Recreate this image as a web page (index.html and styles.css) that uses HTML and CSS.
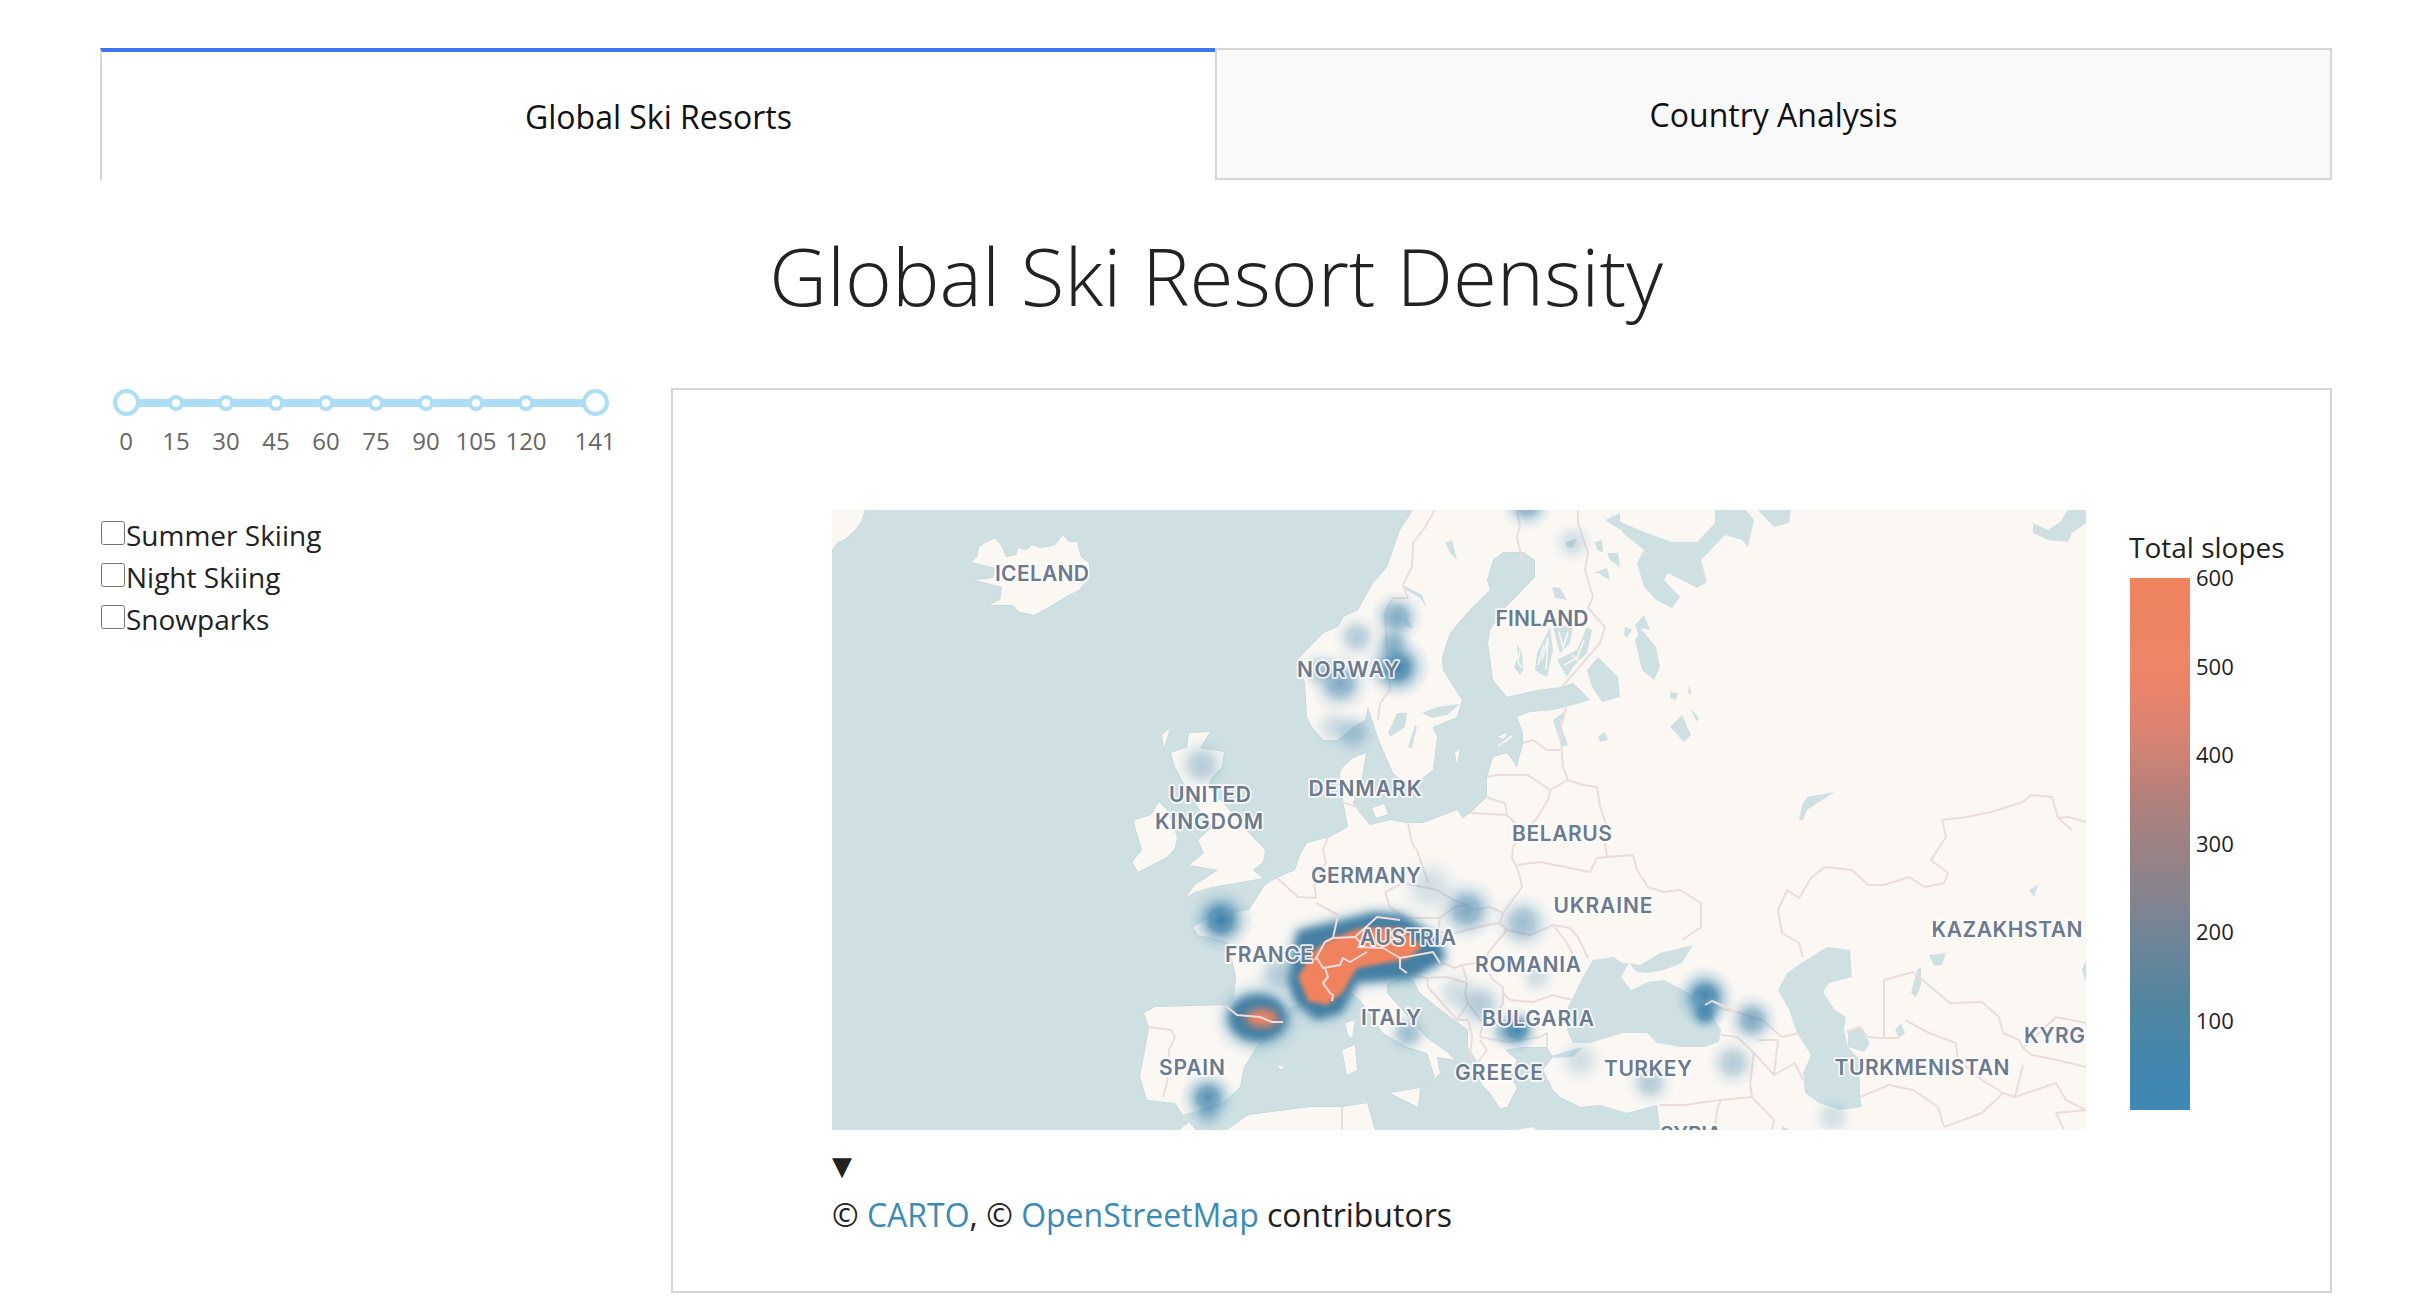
FILE: index.html
```html
<!DOCTYPE html>
<html lang="en">
<head>
<meta charset="utf-8">
<title>Global Ski Resort Density</title>
<link rel="stylesheet" href="styles.css">
</head>
<body>
<div class="page">
  <nav class="tabs">
    <div class="tab tab-active">Global Ski Resorts</div>
    <div class="tab tab-idle">Country Analysis</div>
  </nav>
  <h1 class="title">Global Ski Resort Density</h1>
  <main class="content">
    <aside class="sidebar">
      <div class="slider">
        <div class="slider-track"></div>
        <div class="marks">
          <div class="mark"><span class="dot dot-big"></span><span class="mark-text">0</span></div>
          <div class="mark"><span class="dot"></span><span class="mark-text">15</span></div>
          <div class="mark"><span class="dot"></span><span class="mark-text">30</span></div>
          <div class="mark"><span class="dot"></span><span class="mark-text">45</span></div>
          <div class="mark"><span class="dot"></span><span class="mark-text">60</span></div>
          <div class="mark"><span class="dot"></span><span class="mark-text">75</span></div>
          <div class="mark"><span class="dot"></span><span class="mark-text">90</span></div>
          <div class="mark"><span class="dot"></span><span class="mark-text">105</span></div>
          <div class="mark"><span class="dot"></span><span class="mark-text">120</span></div>
          <div class="mark mark-last"><span class="dot dot-big"></span><span class="mark-text">141</span></div>
        </div>
      </div>
      <div class="checks">
        <label class="check"><input type="checkbox">Summer Skiing</label>
        <label class="check"><input type="checkbox">Night Skiing</label>
        <label class="check"><input type="checkbox">Snowparks</label>
      </div>
    </aside>
    <section class="graph">
      <div class="graph-row">
        <svg class="map" viewBox="0 0 1254 620" width="1254" height="620" xmlns="http://www.w3.org/2000/svg">
          <defs>
            <radialGradient id="heat">
              <stop offset="0" stop-color="#3b7fa8" stop-opacity="1"/>
              <stop offset="0.35" stop-color="#4688ad" stop-opacity="0.8"/>
              <stop offset="0.7" stop-color="#7fb0c8" stop-opacity="0.3"/>
              <stop offset="1" stop-color="#a9cbd9" stop-opacity="0"/>
            </radialGradient>
            <filter id="blur-halo" x="-30%" y="-30%" width="160%" height="160%"><feGaussianBlur stdDeviation="8"/></filter>
            <filter id="blur-band" x="-30%" y="-30%" width="160%" height="160%"><feGaussianBlur stdDeviation="4"/></filter>
            <filter id="blur-core" x="-30%" y="-30%" width="160%" height="160%"><feGaussianBlur stdDeviation="2"/></filter>
          </defs>
          <rect class="sea" width="1254" height="620"/>
          <g class="land">
            <polygon points="0,0 33,0 29,12 23,20 12,30 6,32 0,40"/>
            <polygon points="139,52 145,47 147,37 155,32 163,28 170,37 174,47 184,45 186,38 194,40 200,35 208,38 215,37 223,35 231,25 237,32 245,32 249,47 257,53 257,67 247,80 233,87 217,97 202,105 188,102 180,95 157,95 168,90 170,77 143,70 161,68 163,58 139,52"/>
            <polygon points="357,223 378,222 368,238 392,242 390,257 380,267 376,277 395,297 405,310 417,323 433,340 431,352 421,360 431,368 404,373 380,377 363,382 353,388 363,375 386,360 357,355 372,343 366,330 380,317 368,300 358,285 350,270 343,257 339,243 355,237"/>
            <polygon points="327,292 335,300 345,327 343,338 335,347 306,362 300,352 310,340 304,320 302,310 319,305"/>
            <polygon points="581,0 568,20 555,57 541,73 526,100 511,107 506,117 491,123 475,140 465,150 473,173 475,207 480,217 491,230 506,230 521,217 533,210 536,197 541,213 548,233 561,263 571,272 588,270 601,260 605,227 601,217 625,207 630,190 611,160 610,147 618,123 635,103 658,80 655,70 661,50 671,42 691,42 703,50 703,67 688,83 671,100 658,120 656,133 661,170 675,187 705,180 730,177 741,173 758,190 733,197 721,200 698,202 685,207 691,223 691,233 685,257 675,243 661,247 655,267 655,287 638,303 631,308 625,300 591,313 575,313 558,310 538,315 528,303 521,293 530,267 534,243 521,248 511,257 508,263 511,290 516,317 498,327 475,333 468,345 463,360 445,368 433,375 417,400 400,403 396,397 361,417 366,425 396,432 404,467 402,487 396,495 323,497 312,503 317,518 308,567 315,590 343,593 351,605 392,592 408,577 412,557 427,533 453,513 457,497 475,492 500,497 519,483 528,490 551,523 575,537 595,543 603,567 596,577 608,563 605,547 623,550 615,542 595,528 555,483 555,475 570,467 580,468 588,483 605,497 636,520 636,537 645,552 643,560 650,575 658,583 668,598 675,597 685,578 678,565 685,550 673,540 690,537 715,537 721,547 711,560 721,580 728,587 748,597 768,595 795,603 825,595 828,620 1254,620 1254,0"/>
            <polygon points="347,620 357,612 364,620"/>
            <polygon points="395,620 416,605 478,597 510,597 535,593 543,620"/>
            <polygon points="513,513 523,510 520,528 516,525"/>
            <polygon points="510,540 523,535 525,560 515,565"/>
            <polygon points="558,583 588,578 586,597 576,592"/>
            <polygon points="445,555 453,557 449,560"/>
            <polygon points="665,227 676,222 672,229"/>
            <polygon points="623,243 628,238 625,255"/>
            <polygon points="540,298 552,294 556,304 544,308"/>
            <polygon points="683,620 700,617 706,620"/>
            <polygon points="330,225 338,218 332,238"/>
          </g>
          <g class="water">
            <polygon points="741,487 753,463 761,450 781,447 791,453 797,453 789,467 799,480 816,472 832,470 857,483 877,500 889,520 887,532 873,537 848,537 825,533 815,523 791,523 758,533 741,533 735,520 736,497"/>
            <polygon points="797,453 808,455 828,443 861,435 850,453 832,460 816,463 805,462"/>
            <polygon points="946,480 955,463 971,452 995,437 1018,440 1020,467 997,473 991,482 1003,500 1014,507 1012,520 1016,537 1028,550 1028,587 1030,597 1008,600 987,593 973,583 971,563 979,545 965,523 957,500"/>
            <polygon points="1016,520 1028,517 1038,533 1032,542 1016,537"/>
            <polygon points="715,547 751,537 741,547 721,548"/>
            <polygon points="1063,520 1069,513 1073,523 1067,528"/>
            <polygon points="1079,483 1085,460 1089,457 1089,475 1084,487"/>
            <polygon points="1097,445 1114,443 1110,455 1102,456"/>
            <polygon points="1197,380 1206,375 1202,387"/>
            <polygon points="1250,460 1254,450 1254,472"/>
            <polygon points="779,3 789,12 812,22 840,32 865,32 883,13 883,0 914,0 922,10 916,37 910,30 893,25 869,50 875,72 865,78 836,63 832,70 848,87 840,98 824,90 812,77 805,53 812,40 791,23 779,3"/>
            <polygon points="926,0 942,17 957,13 959,0"/>
            <polygon points="1236,0 1228,12 1216,20 1201,13 1201,23 1216,30 1236,32 1240,23 1254,13 1254,0"/>
            <polygon points="755,160 766,147 786,167 788,187 770,192 760,177"/>
            <polygon points="803,130 810,120 824,137 828,157 822,170 810,160"/>
            <polygon points="721,210 735,200 728,213 736,235 730,237"/>
            <polygon points="838,217 850,205 859,225 852,232"/>
            <polygon points="766,227 773,222 776,230 768,232"/>
            <polygon points="838,182 846,183 844,190 838,188"/>
            <polygon points="857,175 860,185 856,183"/>
            <polygon points="858,198 867,208 865,212"/>
            <polygon points="793,117 800,120 795,128 792,125"/>
            <polygon points="803,115 812,105 818,120 810,118 808,128"/>
            <polygon points="773,10 788,3 788,20"/>
            <polygon points="733,33 745,28 741,38 735,37"/>
            <polygon points="763,32 770,30 771,42 765,40"/>
            <polygon points="775,43 786,43 788,57 778,50"/>
            <polygon points="761,63 775,58 778,70 766,63"/>
            <polygon points="720,77 728,78 735,90 723,88"/>
            <polygon points="613,33 620,30 625,50 618,43"/>
            <polygon points="685,135 690,142 691,160 688,165 682,157 686,147"/>
            <polygon points="705,143 718,117 721,140 715,167 711,165 703,160"/>
            <polygon points="721,117 741,115 738,133 728,143 725,133"/>
            <polygon points="725,150 745,140 755,117 760,120 755,143 741,157 735,167"/>
            <polygon points="556,223 565,203 575,203 573,217 558,227"/>
            <polygon points="576,237 583,215 585,217 580,238"/>
            <polygon points="590,203 605,197 628,194 615,205 600,208"/>
            <polygon points="600,220 625,208 622,215 604,222"/>
            <polygon points="573,107 581,117 578,118 574,115"/>
            <polygon points="571,75 590,85 595,98 588,88 574,80"/>
            <polygon points="967,310 970,295 975,287 1003,282 985,293 975,300 971,310"/>
            <polygon points="950,616 957,620 950,620"/>
          </g>
          <g class="specks">
            <polyline points="688,140 686,152 690,158"/>
            <polyline points="710,150 716,128 714,160"/>
            <polyline points="727,122 731,138 736,122"/>
            <polyline points="732,155 745,148 752,130"/>
            <polyline points="740,145 748,152"/>
            <polyline points="706,155 712,135"/>
            <polyline points="673,232 680,226 666,236"/>
          </g>
          <g class="borders">
            <polyline points="603,0 591,20 581,33 580,57 571,75 576,88 561,88 553,103 555,140 558,180 548,193 546,210"/>
            <polyline points="685,0 688,17 685,27 690,50"/>
            <polyline points="746,0 746,13 756,43 753,60 761,87 756,98 773,117 768,133 730,177"/>
            <polyline points="734,198 728,220 731,257 736,270"/>
            <polyline points="691,233 701,230 715,240 728,240"/>
            <polyline points="655,267 665,265 696,265 718,280 736,270"/>
            <polyline points="736,270 751,275 765,277 768,297 775,317 779,323 773,333 775,347 801,345"/>
            <polyline points="718,280 716,290 705,308 685,330 681,337 680,348 686,360 690,377 671,403 668,413"/>
            <polyline points="638,303 675,305 673,293 653,287"/>
            <polyline points="675,305 683,313 685,330"/>
            <polyline points="685,355 708,352 758,362 765,348 775,347"/>
            <polyline points="801,345 805,360 816,377 831,382 848,380 869,393 869,417 850,430"/>
            <polyline points="576,313 580,333 585,340 596,373"/>
            <polyline points="510,292 525,297"/>
            <polyline points="496,327 491,340 494,353 482,370 484,388 466,387 445,368"/>
            <polyline points="553,382 571,373 605,380 621,390 635,395 641,400 658,397 671,403"/>
            <polyline points="553,382 558,397 573,408 608,408 623,397 635,395"/>
            <polyline points="608,408 606,422 623,423 655,415 668,413 675,420"/>
            <polyline points="606,422 603,443 608,452 623,458 630,455 635,470"/>
            <polyline points="675,420 658,440 651,453 661,470 671,477 671,483"/>
            <polyline points="630,455 645,453"/>
            <polyline points="671,483 678,490 701,492 721,485 740,490"/>
            <polyline points="675,420 698,425 721,415 738,418 746,427 756,448"/>
            <polyline points="721,415 735,433 741,445 750,463"/>
            <polyline points="671,483 671,493 665,503 651,513 648,527"/>
            <polyline points="648,527 675,532 708,527 715,523 715,537"/>
            <polyline points="648,530 655,540 646,552"/>
            <polyline points="636,510 640,527 638,547 643,552"/>
            <polyline points="595,468 615,467 635,473 633,483 636,493"/>
            <polyline points="595,468 596,477 625,510 636,510"/>
            <polyline points="636,493 625,510"/>
            <polyline points="636,493 651,513"/>
            <polyline points="568,463 595,468"/>
            <polyline points="484,393 506,405 500,427"/>
            <polyline points="1110,310 1114,327 1099,350 1116,363 1112,373 1093,377 1077,367 1052,375 1036,375 1020,360 993,357 979,368 967,388 955,380 946,400 950,423 967,433 971,447"/>
            <polyline points="1110,310 1134,307 1159,302 1191,292 1199,285 1220,287 1226,308 1236,307 1254,312"/>
            <polyline points="1226,308 1240,320"/>
            <polyline points="1052,470 1081,462 1118,493 1150,492 1167,507 1171,523 1187,530 1191,538 1224,507 1254,513"/>
            <polyline points="1052,470 1052,528 1036,527 1028,517 1014,522"/>
            <polyline points="1052,528 1067,528"/>
            <polyline points="1073,510 1097,523 1124,533 1126,550 1150,570 1171,583 1150,603"/>
            <polyline points="1028,587 1057,575 1081,580 1106,597 1112,617"/>
            <polyline points="1150,603 1112,617"/>
            <polyline points="1191,538 1200,545 1225,550 1254,557"/>
            <polyline points="1171,583 1183,587 1224,573 1234,590 1254,600 1224,603 1232,620"/>
            <polyline points="1191,555 1183,587"/>
            <polyline points="889,525 905,527 922,543 918,573 920,587 889,590 852,595 828,595"/>
            <polyline points="885,600 883,620"/>
            <polyline points="889,590 885,600"/>
            <polyline points="920,587 942,610 940,620"/>
            <polyline points="873,495 905,502 930,510 950,527 967,523"/>
            <polyline points="926,530 946,530 942,565 963,553 971,570"/>
            <polyline points="922,543 942,565"/>
            <polyline points="317,517 339,520 343,527 337,540 335,573 331,587"/>
            <polyline points="510,597 510,620"/>
          </g>
          <g class="heat">
            <circle class="h1" cx="565" cy="157" r="34"/>
            <circle class="h3" cx="565" cy="107" r="28"/>
            <circle class="h4" cx="561" cy="133" r="22"/>
            <circle class="h5" cx="525" cy="127" r="26"/>
            <circle class="h3" cx="508" cy="173" r="32"/>
            <circle class="h5" cx="488" cy="160" r="22"/>
            <circle class="h5" cx="521" cy="223" r="26"/>
            <circle class="h6" cx="501" cy="217" r="24"/>
            <circle class="h5" cx="370" cy="255" r="30"/>
            <circle class="h3" cx="695" cy="-6" r="28"/>
            <circle class="h6" cx="741" cy="33" r="24"/>
            <circle class="h1" cx="389" cy="410" r="34"/>
            <circle class="h5" cx="447" cy="465" r="28"/>
            <circle class="h4" cx="576" cy="523" r="24"/>
            <circle class="h6" cx="598" cy="377" r="36"/>
            <circle class="h6" cx="625" cy="483" r="28"/>
            <circle class="h3" cx="635" cy="400" r="34"/>
            <circle class="h4" cx="691" cy="413" r="32"/>
            <circle class="h5" cx="648" cy="495" r="30"/>
            <circle class="h1" cx="685" cy="520" r="24"/>
            <circle class="h5" cx="672" cy="522" r="20"/>
            <circle class="h6" cx="705" cy="467" r="22"/>
            <circle class="h1" cx="873" cy="487" r="32"/>
            <circle class="h2" cx="873" cy="503" r="20"/>
            <circle class="h3" cx="920" cy="510" r="28"/>
            <circle class="h5" cx="901" cy="553" r="28"/>
            <circle class="h5" cx="818" cy="573" r="26"/>
            <circle class="h6" cx="748" cy="550" r="28"/>
            <circle class="h6" cx="1001" cy="607" r="24"/>
            <circle class="h2" cx="376" cy="588" r="30"/>
            <circle class="h6" cx="376" cy="606" r="20"/>
            <ellipse class="band-halo" cx="426" cy="508" rx="34" ry="28"/>
            <ellipse class="band-blue" cx="426" cy="508" rx="29" ry="23"/>
            <ellipse class="band-core-soft" cx="430" cy="508" rx="16" ry="9"/>
            <polygon class="band-halo" points="456,470 466,421 501,413 541,403 570,405 605,428 613,447 608,452 578,469 525,472 510,502 485,510 463,492"/>
            <polygon class="band-blue" points="456,470 466,421 501,413 541,403 570,405 605,428 613,447 608,452 578,469 525,472 510,502 485,510 463,492"/>
            <polygon class="band-core" points="466,467 481,442 495,431 528,418 571,418 590,437 575,449 525,458 511,482 495,495 476,491"/>
          </g>
          <g class="borders-over">
            <polyline points="483,450 493,432 501,428 523,427 528,432 531,438"/>
            <polyline points="485,448 491,458 508,455 511,448 518,452 535,442"/>
            <polyline points="493,458 496,467 491,473 498,483 501,485 500,491"/>
            <polyline points="525,437 551,438 568,448 601,442 608,453"/>
            <polyline points="568,448 568,458 575,463"/>
            <polyline points="501,428 506,405"/>
            <polyline points="523,427 545,407 568,410"/>
            <polyline points="395,497 405,505 428,507 440,512 451,512"/>
            <polyline points="873,495 880,491 905,502"/>
          </g>
          <g class="labels">
            <text x="210" y="71" text-anchor="middle" textLength="94">ICELAND</text>
            <text x="516" y="167" text-anchor="middle" textLength="102">NORWAY</text>
            <text x="378" y="292" text-anchor="middle" textLength="82">UNITED</text>
            <text x="377" y="319" text-anchor="middle" textLength="108">KINGDOM</text>
            <text x="533" y="286" text-anchor="middle" textLength="113">DENMARK</text>
            <text x="710" y="116" text-anchor="middle" textLength="93">FINLAND</text>
            <text x="534" y="373" text-anchor="middle" textLength="110">GERMANY</text>
            <text x="437" y="452" text-anchor="middle" textLength="88">FRANCE</text>
            <text x="576" y="435" text-anchor="middle" textLength="96">AUSTRIA</text>
            <text x="559" y="515" text-anchor="middle" textLength="60">ITALY</text>
            <text x="360" y="565" text-anchor="middle" textLength="66">SPAIN</text>
            <text x="730" y="331" text-anchor="middle" textLength="100">BELARUS</text>
            <text x="771" y="403" text-anchor="middle" textLength="99">UKRAINE</text>
            <text x="696" y="462" text-anchor="middle" textLength="106">ROMANIA</text>
            <text x="706" y="516" text-anchor="middle" textLength="112">BULGARIA</text>
            <text x="667" y="570" text-anchor="middle" textLength="88">GREECE</text>
            <text x="816" y="566" text-anchor="middle" textLength="88">TURKEY</text>
            <text x="1175" y="427" text-anchor="middle" textLength="151">KAZAKHSTAN</text>
            <text x="1090" y="565" text-anchor="middle" textLength="175">TURKMENISTAN</text>
            <text x="1192" y="533" textLength="150">KYRGYZSTAN</text>
            <text x="859" y="632" text-anchor="middle" textLength="62">SYRIA</text>
          </g>
        </svg>
        <div class="legend">
          <div class="legend-title">Total slopes</div>
          <div class="legend-body">
            <div class="colorbar"></div>
            <div class="ticks">
              <span class="tick">600</span>
              <span class="tick">500</span>
              <span class="tick">400</span>
              <span class="tick">300</span>
              <span class="tick">200</span>
              <span class="tick">100</span>
            </div>
          </div>
        </div>
      </div>
      <div class="collapse">▼</div>
      <div class="attribution">© <a href="#">CARTO</a>, © <a href="#">OpenStreetMap</a> contributors</div>
    </section>
  </main>
</div>
</body>
</html>
```
FILE: styles.css
```css
* { box-sizing: border-box; }
html, body { margin: 0; padding: 0; background: #fff; }
body { font-family: "Open Sans", "Noto Sans", sans-serif; color: #212121; overflow: hidden; height: 1300px; }
.page { padding: 48px 98px 0 100px; }

.tabs { display: flex; height: 132px; }
.tab { flex: 1 1 0; display: flex; align-items: center; justify-content: center; font-size: 32px; color: #111; }
.tab-active { background: #fff; border-top: 4px solid #3b74ef; border-left: 2px solid #d6d6d6; padding-top: 1px; }
.tab-idle { background: #f9f9f9; border: 2px solid #d6d6d6; }

.title { margin: 0; height: 208px; padding-top: 40px; text-align: center; font-size: 80px; line-height: 110px; font-weight: 300; color: #222; }

.content { display: flex; }
.sidebar { width: 571px; flex: none; }

.slider { position: relative; margin-left: 1px; padding-top: 1px; }
.slider-track { position: absolute; left: 26px; width: 469px; top: 11px; height: 8px; background: #aeddf7; }
.marks { position: relative; display: flex; }
.mark { width: 50px; display: flex; flex-direction: column; align-items: center; flex: none; }
.mark-last { margin-left: 19px; }
.dot { display: block; width: 16px; height: 16px; margin: 6px 0 13px; border-radius: 50%; background: #fff; border: 4.5px solid #aeddf7; }
.dot-big { width: 27px; height: 27px; margin: 0 0 8px; border-width: 4px; }
.mark-text { font-size: 24px; line-height: 33px; color: #666; white-space: nowrap; }

.checks { margin-top: 57px; margin-left: 1px; }
.check { display: flex; align-items: flex-start; height: 42px; font-size: 28px; line-height: 42px; color: #222; }
.check input { width: 24px; height: 24px; margin: 7px 1px 0 0; flex: none; }

.graph { flex: 1 1 0; height: 905px; border: 2px solid #d6d6d6; padding: 120px 0 0 159px; }
.graph-row { display: flex; }
.map { display: block; flex: none; }
.sea { fill: #cfe0e3; }
.land polygon { fill: #fbf8f4; stroke: #bdd4da; stroke-width: 1.2; stroke-linejoin: round; paint-order: stroke; }
.water polygon { fill: #cfe0e3; }
.specks polyline { fill: none; stroke: #fbf8f4; stroke-width: 1.5; }
.borders polyline { fill: none; stroke: #ecdcdc; stroke-width: 2; stroke-linejoin: round; }
.borders-over polyline { fill: none; stroke: #f0dcdc; stroke-width: 2; stroke-linejoin: round; }
.heat circle { fill: url(#heat); }
.h1 { opacity: 1; }
.h2 { opacity: 0.85; }
.h3 { opacity: 0.65; }
.h4 { opacity: 0.5; }
.h5 { opacity: 0.38; }
.h6 { opacity: 0.22; }
.band-halo { fill: #8db8cc; filter: url(#blur-halo); }
.band-blue { fill: #457fa3; filter: url(#blur-band); }
.band-core { fill: #f0835d; filter: url(#blur-core); }
.band-core-soft { fill: #ef835e; filter: url(#blur-band); }
.labels text { font-family: Inter, "Liberation Sans", sans-serif; font-size: 21px; font-weight: 600; fill: #6c7a8f; stroke: #fff; stroke-width: 3.5px; stroke-opacity: .85; paint-order: stroke; stroke-linejoin: round; }

.legend { margin-left: 43px; padding-top: 18px; flex: none; }
.legend-title { font-size: 28px; line-height: 38px; color: #222; white-space: nowrap; }
.legend-body { display: flex; margin-top: 12px; margin-left: 1px; }
.colorbar { width: 60px; height: 532px; background: linear-gradient(to bottom, #f0845f 0%, #ee8468 18%, #d88373 30%, #b0807c 42%, #8e8389 56%, #6f8598 68%, #51859f 80%, #4287af 92%, #3f88b5 100%); }
.ticks { display: flex; flex-direction: column; margin: -17px 0 0 6px; }
.tick { height: 88.6px; font-size: 22px; line-height: 32px; color: #222; }

.collapse { margin-top: 18px; font-family: "DejaVu Sans", sans-serif; font-size: 26px; line-height: 36px; color: #212121; }
.attribution { margin-top: 9px; font-size: 32px; line-height: 44px; color: #212121; }
.attribution a { color: #3c8ab6; text-decoration: none; }
```
